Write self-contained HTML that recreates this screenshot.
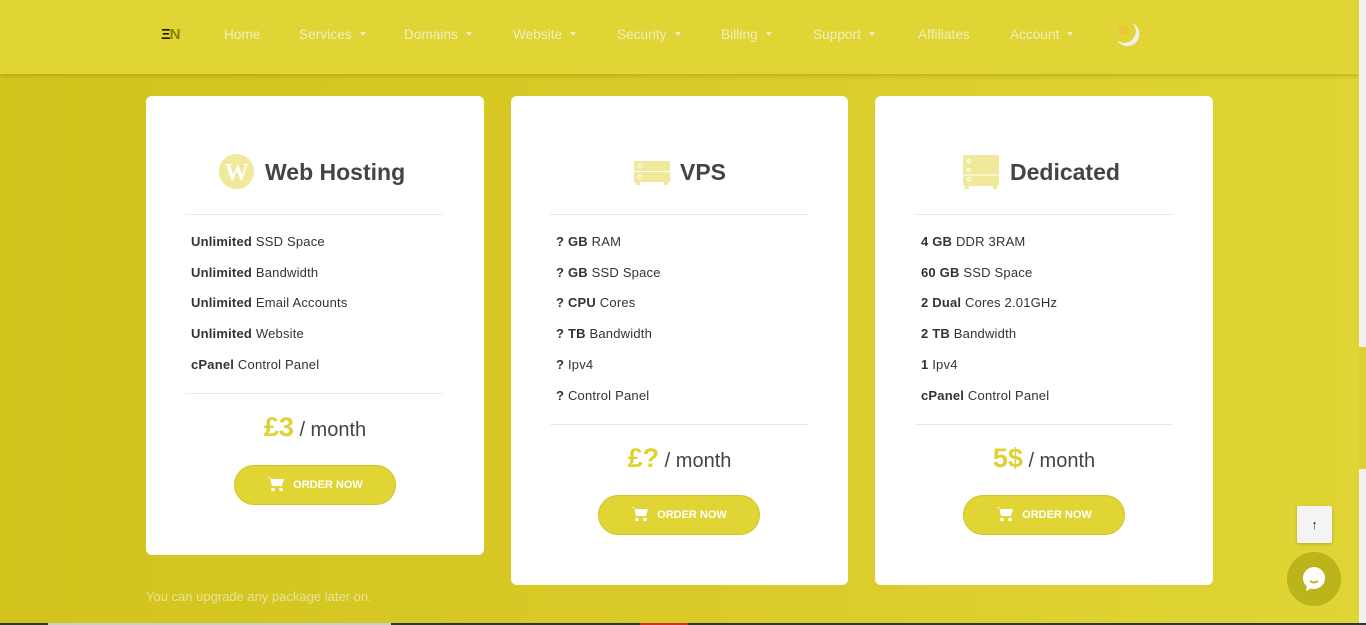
<!DOCTYPE html>
<html><head><meta charset="utf-8"><style>
*{margin:0;padding:0;box-sizing:border-box}
html,body{width:1366px;height:625px;overflow:hidden}
body{font-family:"Liberation Sans",sans-serif;background:linear-gradient(90deg,#d2c41b 0%,#d9ca28 50%,#e0d535 100%);position:relative}
.hdr{position:absolute;left:0;top:0;width:1359px;height:74px;background:#e0d535;box-shadow:0 2px 4px rgba(150,140,0,.45)}
.nav a{position:absolute;top:27px;color:#f1eec0;font-size:13.5px;text-decoration:none;letter-spacing:.1px}
.car{display:inline-block;width:0;height:0;border-left:3.5px solid transparent;border-right:3.5px solid transparent;border-top:4px solid #f1eec0;margin-left:8px;vertical-align:3px}
.sb{position:absolute;left:1359px;top:0;width:7px;height:625px;background:#f1f1f1}
.sbt{position:absolute;left:1359px;top:347px;width:7px;height:122px;background:#dcd033}
.card{position:absolute;background:#fff;border-radius:6px}
.title{position:absolute;top:63px;font-size:23px;font-weight:bold;color:#444;white-space:nowrap}
.hr{position:absolute;height:1px;background:#e9e9e9}
.feat{position:absolute;font-size:13px;color:#333;line-height:30.7px;letter-spacing:.2px}
.feat b{font-weight:bold}
.price{position:absolute;width:100%;text-align:center;font-size:20px;color:#444}
.price b{color:#ded132;font-size:27px;font-weight:900}
.btn{position:absolute;width:162px;height:40px;border-radius:20px;background:#e0d535;border:1px solid #d0c428;color:#fff;font-size:11px;font-weight:bold;text-align:center;line-height:38px}
.btn svg{vertical-align:-4px;margin-right:8px}
</style></head><body>
<div class="hdr">
<div style="position:absolute;left:161px;top:26px;font-size:15px;font-weight:900;color:#1a1a00;letter-spacing:-1px">Ξ<span style="color:#8a7d00">N</span></div>
<div class="nav">
<a style="left:224px">Home</a>
<a style="left:299px">Services<span class="car"></span></a>
<a style="left:404px">Domains<span class="car"></span></a>
<a style="left:513px">Website<span class="car"></span></a>
<a style="left:617px">Security<span class="car"></span></a>
<a style="left:721px">Billing<span class="car"></span></a>
<a style="left:813px">Support<span class="car"></span></a>
<a style="left:918px">Affiliates</a>
<a style="left:1010px">Account<span class="car"></span></a>
</div>
<svg style="position:absolute;left:1114px;top:20px" width="30" height="30" viewBox="0 0 30 30"><circle cx="9" cy="10" r="5" fill="#f0c040"/><path d="M18 3a12 12 0 1 1-15 17a11 11 0 0 0 15-17z" fill="#eef0f0"/></svg>
</div>
<div class="sb"></div><div class="sbt"></div>

<div class="card" style="left:146px;top:96px;width:338px;height:459px">
<svg style="position:absolute;left:72px;top:57px" width="37" height="37" viewBox="0 0 40 40"><circle cx="20" cy="20" r="19" fill="#f0e99a"/><text x="20" y="29" text-anchor="middle" font-family="Liberation Serif" font-size="26" font-weight="bold" fill="#fff">W</text></svg>
<div class="title" style="left:119px">Web Hosting</div>
<div class="hr" style="left:39px;top:118px;width:258px"></div>
<div class="feat" style="left:45px;top:131px"><b>Unlimited</b> SSD Space<br><b>Unlimited</b> Bandwidth<br><b>Unlimited</b> Email Accounts<br><b>Unlimited</b> Website<br><b>cPanel</b> Control Panel</div>
<div class="hr" style="left:39px;top:297px;width:258px"></div>
<div class="price" style="top:316px"><b>£3</b> / month</div>
<div class="btn" style="left:88px;top:369px"><svg width="18" height="16" viewBox="0 0 18 16"><path d="M0 1h3l2 9h10l2-7H5" fill="#fff"/><circle cx="6" cy="13.5" r="1.8" fill="#fff"/><circle cx="14" cy="13.5" r="1.8" fill="#fff"/></svg>ORDER NOW</div>
</div>

<div class="card" style="left:511px;top:96px;width:337px;height:489px">
<svg style="position:absolute;left:123px;top:65px" width="36" height="24" viewBox="0 0 36 24"><rect x="0" y="0" width="36" height="10" fill="#f0e99a"/><rect x="0" y="11" width="36" height="10" fill="#f0e99a"/><rect x="2" y="21" width="4" height="3" fill="#f0e99a"/><rect x="30" y="21" width="4" height="3" fill="#f0e99a"/><circle cx="6" cy="5" r="2" fill="none" stroke="#fff"/><circle cx="6" cy="16" r="2" fill="none" stroke="#fff"/></svg>
<div class="title" style="left:169px">VPS</div>
<div class="hr" style="left:39px;top:118px;width:258px"></div>
<div class="feat" style="left:45px;top:131px"><b>? GB</b> RAM<br><b>? GB</b> SSD Space<br><b>? CPU</b> Cores<br><b>? TB</b> Bandwidth<br><b>?</b> Ipv4<br><b>?</b> Control Panel</div>
<div class="hr" style="left:39px;top:328px;width:258px"></div>
<div class="price" style="top:347px"><b>£?</b> / month</div>
<div class="btn" style="left:87px;top:399px"><svg width="18" height="16" viewBox="0 0 18 16"><path d="M0 1h3l2 9h10l2-7H5" fill="#fff"/><circle cx="6" cy="13.5" r="1.8" fill="#fff"/><circle cx="14" cy="13.5" r="1.8" fill="#fff"/></svg>ORDER NOW</div>
</div>

<div class="card" style="left:875px;top:96px;width:338px;height:489px">
<svg style="position:absolute;left:88px;top:59px" width="36" height="34" viewBox="0 0 36 34"><rect x="0" y="0" width="36" height="31" rx="1" fill="#f0e99a"/><rect x="2" y="31" width="4" height="3" fill="#f0e99a"/><rect x="30" y="31" width="4" height="3" fill="#f0e99a"/><circle cx="6" cy="6" r="1.5" fill="none" stroke="#fff"/><circle cx="6" cy="15" r="1.5" fill="none" stroke="#fff"/><circle cx="6" cy="24" r="1.5" fill="none" stroke="#fff"/><path d="M0 20h36" stroke="#fff"/></svg>
<div class="title" style="left:135px">Dedicated</div>
<div class="hr" style="left:40px;top:118px;width:258px"></div>
<div class="feat" style="left:46px;top:131px"><b>4 GB</b> DDR 3RAM<br><b>60 GB</b> SSD Space<br><b>2 Dual</b> Cores 2.01GHz<br><b>2 TB</b> Bandwidth<br><b>1</b> Ipv4<br><b>cPanel</b> Control Panel</div>
<div class="hr" style="left:40px;top:328px;width:258px"></div>
<div class="price" style="top:347px"><b>5$</b> / month</div>
<div class="btn" style="left:88px;top:399px"><svg width="18" height="16" viewBox="0 0 18 16"><path d="M0 1h3l2 9h10l2-7H5" fill="#fff"/><circle cx="6" cy="13.5" r="1.8" fill="#fff"/><circle cx="14" cy="13.5" r="1.8" fill="#fff"/></svg>ORDER NOW</div>
</div>

<div style="position:absolute;left:146px;top:589px;font-size:13px;color:#e8e29a">You can upgrade any package later on.</div>
<div style="position:absolute;left:1297px;top:506px;width:35px;height:37px;background:#f4f4f4;border-radius:2px;box-shadow:0 1px 3px rgba(0,0,0,.2);text-align:center;line-height:37px;font-size:13px;font-weight:bold;color:#333">↑</div>
<div style="position:absolute;left:1287px;top:552px;width:54px;height:54px;border-radius:50%;background:#bbb41a"></div>
<svg style="position:absolute;left:1301px;top:566px" width="26" height="26" viewBox="0 0 26 26"><circle cx="13" cy="12" r="11" fill="#fff"/><path d="M6 19l-1 6 6-3z" fill="#fff"/><path d="M9 15q4 3 8 0" stroke="#bbb41a" stroke-width="2" fill="none"/></svg>
<div style="position:absolute;left:0;top:623px;width:1366px;height:2px;background:#333"></div>
<div style="position:absolute;left:48px;top:623px;width:343px;height:2px;background:#ccc"></div>
<div style="position:absolute;left:640px;top:623px;width:48px;height:2px;background:#c33"></div>
</body></html>
